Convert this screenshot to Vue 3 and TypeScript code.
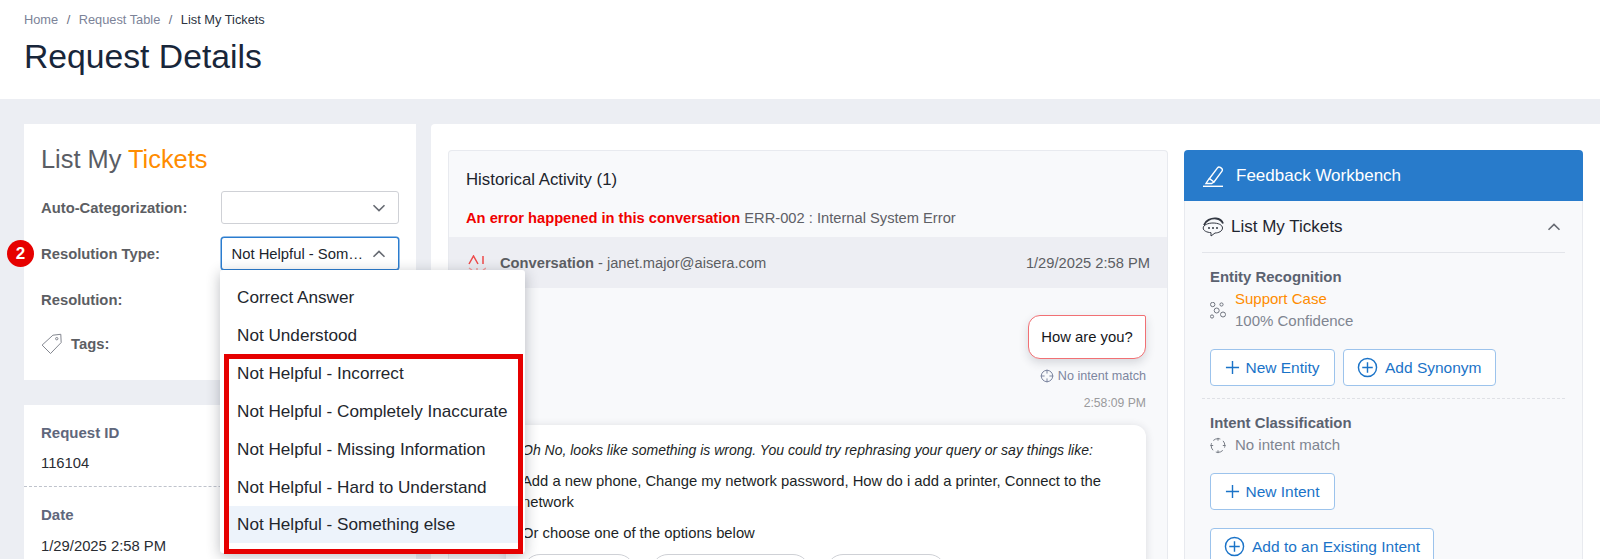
<script setup lang="ts">
const upper: string[] = ['Correct Answer', 'Not Understood']
const lower: string[] = [
  'Not Helpful - Incorrect',
  'Not Helpful - Completely Inaccurate',
  'Not Helpful - Missing Information',
  'Not Helpful - Hard to Understand',
]
const chips: number[] = [112, 159, 120]
</script>

<template>
  <div class="page">
    <header class="top">
      <nav class="crumbs">
        <span>Home</span><i>/</i><span>Request Table</span><i>/</i><b>List My Tickets</b>
      </nav>
      <h1>Request Details</h1>
    </header>

    <div class="content">
      <aside class="left">
        <section class="form-card">
          <h2>List My <em>Tickets</em></h2>
          <div class="row">
            <label>Auto-Categorization:</label>
            <div class="select">
              <svg class="chev" viewBox="0 0 14 8"><path d="M1.5 1.2 7 6.6l5.5-5.4" /></svg>
            </div>
          </div>
          <div class="row">
            <span class="badge">2</span>
            <label>Resolution Type:</label>
            <div class="select open">
              <span>Not Helpful - Som…</span>
              <svg class="chev" viewBox="0 0 14 8"><path d="M1.5 6.8 7 1.4l5.5 5.4" /></svg>
              <div class="menu">
                <div v-for="o in upper" :key="o" class="opt">{{ o }}</div>
                <div class="redbox">
                  <div class="redlist">
                    <div v-for="o in lower" :key="o" class="opt">{{ o }}</div>
                    <div class="opt hover">Not Helpful - Something else</div>
                  </div>
                </div>
              </div>
            </div>
          </div>
          <div class="row"><label>Resolution:</label></div>
          <div class="row tags">
            <svg class="tag" viewBox="0 0 24 24" fill="none">
              <path d="M1.2 13.2 13 2.4l8.6-1 .4 9L10.4 22.4Z" />
              <circle cx="17.2" cy="6.2" r="1.3" />
            </svg>
            <label>Tags:</label>
          </div>
        </section>

        <section class="info-card">
          <div class="info first">
            <h4>Request ID</h4>
            <p>116104</p>
          </div>
          <div class="info">
            <h4>Date</h4>
            <p>1/29/2025 2:58 PM</p>
          </div>
        </section>
      </aside>

      <main class="main">
        <section class="history">
          <h3>Historical Activity (1)</h3>
          <p class="err"><b>An error happened in this conversation</b> ERR-002 : Internal System Error</p>
          <div class="band">
            <svg class="ai" viewBox="0 0 18 18" fill="none">
              <path d="M1 9 5.500 1 10 9M15 1v8" />
              <path class="pale" d="M1 13l3 2M15 15l3-2M9 13v2" />
            </svg>
            <span class="conv"><b>Conversation</b> - janet.major@aisera.com</span>
            <span class="when">1/29/2025 2:58 PM</span>
          </div>
          <div class="chat">
            <div class="bubble">How are you?</div>
            <div class="match">
              <svg viewBox="0 0 14 14" fill="none">
                <circle cx="7" cy="7" r="5.700" />
                <path d="M7 .6v4M7 9.400v4M.6 7h4M9.400 7h4" />
              </svg>
              No intent match
            </div>
            <div class="time">2:58:09 PM</div>
            <div class="reply">
              <p><i>Oh No, looks like something is wrong. You could try rephrasing your query or say things like:</i></p>
              <p>Add a new phone, Change my network password, How do i add a printer, Connect to the network</p>
              <p>Or choose one of the options below</p>
              <div class="chips">
                <span v-for="w in chips" :key="w" class="chip" :style="{ width: w + 'px' }"></span>
              </div>
            </div>
          </div>
        </section>

        <section class="bench">
          <div class="bench-head">
            <svg viewBox="0 0 22 22" fill="none">
              <path d="M7.500 13.500 15.500 2.800a2 2 0 0 1 2.800-.4l1.300 1a2 2 0 0 1 .4 2.800L12 17Z" />
              <path d="M7.500 13.500 5.800 15.600 4 18.500h5.600L12 17" />
              <path d="M1 21.300h20" />
            </svg>
            Feedback Workbench
          </div>
          <div class="bench-body">
            <div class="bench-title">
              <svg viewBox="0 0 22 20" fill="none">
                <path class="thick" d="M2 8C3.500 3.500 9 1 14 1.500c3.500.4 6 2 7 5" />
                <path d="M11 6c5 0 9.500 1.800 9.500 5S16.500 16 13 16l-4 3v-3.300C5 15.300 1.200 14 1.200 11 1.200 8 6 6 11 6Z" />
                <circle class="dot" cx="7" cy="11" r="1" />
                <circle class="dot" cx="11" cy="11" r="1" />
                <circle class="dot" cx="15" cy="11" r="1" />
              </svg>
              <span>List My Tickets</span>
              <svg class="chev up" viewBox="0 0 14 8"><path d="M1.500 6.800 7 1.400l5.500 5.400" /></svg>
            </div>

            <div class="block entity">
              <h5>Entity Recognition</h5>
              <div class="rec">
                <svg viewBox="0 0 16 17" fill="none">
                  <circle cx="2.700" cy="2.500" r="2.200" />
                  <circle cx="11.500" cy="2.500" r="1.600" />
                  <circle cx="6.700" cy="8.500" r="2.500" />
                  <circle cx="2" cy="14.500" r="1.600" />
                  <circle cx="13" cy="12.500" r="2.500" />
                </svg>
                <div>
                  <div class="org">Support Case</div>
                  <div class="conf">100% Confidence</div>
                </div>
              </div>
              <div class="btns">
                <button class="btn w125">
                  <svg class="plus" viewBox="0 0 16 16"><path d="M8 1v14M1 8h14" /></svg>New Entity
                </button>
                <button class="btn">
                  <svg class="cplus" viewBox="0 0 22 22"><circle cx="11" cy="11" r="9.500" /><path d="M11 5.500v11M5.500 11h11" /></svg>Add Synonym
                </button>
              </div>
            </div>

            <div class="block intent">
              <h5>Intent Classification</h5>
              <div class="rec one">
                <svg viewBox="0 0 17 17" fill="none">
                  <circle class="ring" cx="8.500" cy="8.500" r="7.300" />
                  <path d="M8.500 .4v3M8.500 13.600v3M.4 8.500h3M13.600 8.500h3" />
                </svg>
                <div class="conf">No intent match</div>
              </div>
              <button class="btn w125 solo">
                <svg class="plus" viewBox="0 0 16 16"><path d="M8 1v14M1 8h14" /></svg>New Intent
              </button>
              <button class="btn solo second">
                <svg class="cplus" viewBox="0 0 22 22"><circle cx="11" cy="11" r="9.500" /><path d="M11 5.500v11M5.500 11h11" /></svg>Add to an Existing Intent
              </button>
            </div>
          </div>
        </section>
      </main>
    </div>
  </div>
</template>

<style>
html, body { margin: 0; height: 559px; overflow: hidden; background: #eceef3; }
</style>

<style scoped>
.page {
  width: 1600px;
  height: 559px;
  overflow: hidden;
  background: #eceef3;
  font-family: "Liberation Sans", Arial, sans-serif;
  font-size: 14.8px;
  color: #1c1f26;
}
p, h1, h2, h3, h4, h5 { margin: 0; }

.top {
  height: 99px;
  box-sizing: border-box;
  background: #fff;
  padding: 12px 0 0 24px;
}
.crumbs { display: flex; font-size: 12.800px; line-height: 16px; color: #7c8398; }
.crumbs i { font-style: normal; margin: 0 8.500px; color: #6a7182; }
.crumbs b { font-weight: 400; color: #2c3442; }
h1 {
  margin-top: 7px;
  font-size: 33.700px;
  line-height: 42px;
  font-weight: 400;
  color: #18263a;
}

.content { display: flex; gap: 15px; padding: 25px 0 0 24px; height: 460px; box-sizing: border-box; }

.left { width: 392px; flex: none; display: flex; flex-direction: column; gap: 25px; }
.form-card { height: 256px; flex: none; box-sizing: border-box; background: #fff; padding: 20px 17px 0; }
h2 { font-size: 25.400px; line-height: 30px; font-weight: 400; color: #5a5d64; margin-bottom: 17px; }
h2 em { font-style: normal; color: #ff8c00; }
.row { position: relative; display: flex; align-items: center; height: 33px; margin-bottom: 13px; }
.row label { width: 179.500px; flex: none; font-weight: 700; color: #5c5e63; }
.row.tags { margin-top: -2px; }
.row.tags label { width: auto; margin-left: 8px; }
.tag { width: 22px; height: 22px; flex: none; stroke: #777b84; stroke-width: 1; }
.badge {
  position: absolute;
  left: -34px;
  top: 3px;
  width: 27px;
  height: 27px;
  border-radius: 50%;
  background: #e60000;
  color: #fff;
  font-weight: 700;
  font-size: 17px;
  line-height: 27px;
  text-align: center;
}
.select {
  position: relative;
  width: 178.500px;
  height: 33px;
  box-sizing: border-box;
  border: 1px solid #cfd1d6;
  border-radius: 3px;
  background: #fff;
  display: flex;
  align-items: center;
  padding-left: 10px;
  color: #20242c;
}
.select.open { border-color: #2a7ccf; box-shadow: 0 0 0 .5px #2a7ccf; }
.chev {
  position: absolute;
  right: 12px;
  top: 12px;
  width: 14px;
  height: 8px;
  fill: none;
  stroke: #666a72;
  stroke-width: 1.600;
}
.menu {
  position: absolute;
  left: -1.500px;
  top: 32px;
  width: 305px;
  height: 283px;
  z-index: 3;
  box-sizing: border-box;
  padding-top: 8px;
  background: #fff;
  border-radius: 3px;
  box-shadow: 0 3px 14px rgba(30, 35, 50, .3);
  font-size: 17.150px;
}
.opt { height: 38px; line-height: 38px; padding-left: 17px; color: #23262d; }
.redbox {
  position: absolute;
  left: 4px;
  top: 84px;
  width: 299px;
  height: 200px;
  box-sizing: border-box;
  border: 5px solid #e60000;
}
.redlist { margin-top: -5px; }
.redbox .opt { padding-left: 8px; height: 38px; }
.redbox .hover { background: #edf3fb; height: 37px; line-height: 37px; }

.info-card { flex: 1; background: #fff; }
.info { height: 82px; box-sizing: border-box; padding: 19px 0 0 17px; }
.info.first { border-bottom: 1px dashed #bfc3cc; }
.info.first p { margin-top: 12px; }
.info h4 { font-size: 15px; line-height: 18px; color: #5f677c; }
.info p { margin-top: 13px; line-height: 18px; color: #2a2d33; }

.main {
  flex: 1;
  display: flex;
  gap: 16px;
  background: #fff;
  border-radius: 4px 0 0 0;
  padding: 26px 17px 0;
  min-width: 0;
}
.history {
  width: 720px;
  flex: none;
  box-sizing: border-box;
  background: #f8f9fb;
  border: 1px solid #e8eaef;
  border-bottom: 0;
  border-radius: 4px 4px 0 0;
  overflow: hidden;
}
h3 { font-size: 16.800px; font-weight: 400; line-height: 20px; padding: 19px 0 0 17px; color: #20242c; }
.err { padding: 18px 0 0 17px; line-height: 20px; font-size: 14.700px; color: #5e6066; }
.err b { color: #f00000; }
.band {
  margin-top: 9px;
  height: 51px;
  background: #edeef3;
  display: flex;
  align-items: center;
  padding: 0 17px 0 19px;
  color: #5c5e63;
  font-size: 14.700px;
}
.ai { width: 18px; height: 18px; margin: 3px 14px 0 0; stroke: #ee4a4a; stroke-width: 1.500; }
.ai .pale { stroke: #f4a0a0; }
.conv { flex: 1; }
.chat { display: flex; flex-direction: column; align-items: flex-end; padding: 27px 21px 0 0; }
.bubble {
  width: 118px;
  height: 44px;
  box-sizing: border-box;
  background: #fff;
  border: 1px solid #f17074;
  border-radius: 12px 2px 12px 12px;
  box-shadow: 0 4px 10px rgba(40, 45, 60, .16);
  line-height: 42px;
  text-align: center;
  color: #15171b;
}
.match { margin-top: 9px; display: flex; align-items: center; font-size: 12.600px; line-height: 16px; color: #7d86a0; }
.match svg { width: 14px; height: 14px; margin-right: 4px; stroke: #7d86a0; stroke-width: 1; }
.time { margin-top: 11px; font-size: 12.200px; line-height: 16px; color: #9a9a9c; }
.reply {
  margin-top: 14px;
  align-self: flex-end;
  width: 640px;
  height: 200px;
  box-sizing: border-box;
  background: #fff;
  border-radius: 12px;
  padding: 15px 0 0 16px;
  box-shadow: 0 1px 8px rgba(40, 45, 60, .14);
  color: #1c1f26;
}
.reply p { line-height: 21px; margin-bottom: 10px; width: 590px; }
.reply i { font-size: 14px; }
.chips { display: flex; gap: 16px; margin: 0 0 0 1px; }
.chip { height: 34px; border: 1px solid #cfd1d6; border-radius: 17px; box-sizing: border-box; }

.bench { width: 399px; flex: none; box-sizing: border-box; }
.bench-head {
  height: 51px;
  background: #287bcb;
  border-radius: 4px 4px 0 0;
  color: #fff;
  font-size: 17px;
  display: flex;
  align-items: center;
  padding-left: 18px;
}
.bench-head svg { width: 22px; height: 22px; margin-right: 12px; stroke: #fff; stroke-width: 1.400; }
.bench-body {
  background: #f8f9fb;
  border: 1px solid #e8eaef;
  border-width: 0 1px;
  height: 380px;
  padding: 0 17px;
}
.bench-title {
  position: relative;
  height: 51px;
  border-bottom: 1px solid #e3e5ea;
  display: flex;
  align-items: center;
  font-size: 17px;
  color: #1f2530;
}
.bench-title > svg:first-child { width: 22px; height: 20px; margin-right: 7px; stroke: #333842; stroke-width: 1; }
.bench-title .thick { stroke-width: 1.800; }
.bench-title .dot { fill: #333842; stroke: none; }
.chev.up { right: 4px; top: 22px; }
.block { padding-left: 8px; }
.entity { height: 146px; border-bottom: 1px dashed #dfe1e6; box-sizing: border-box; padding-top: 15px; }
.intent { padding-top: 15px; }
h5 { font-size: 14.900px; line-height: 18px; color: #5b6270; }
.rec { display: flex; align-items: center; gap: 9px; margin-top: 2px; }
.rec > svg { width: 16px; height: 17px; stroke: #70757f; stroke-width: 1; flex: none; }
.rec .ring { stroke-dasharray: 8 3.470; stroke-dashoffset: 5.700; }
.org { font-size: 15px; line-height: 22px; color: #ff8c00; }
.conf { font-size: 15px; line-height: 22px; color: #7f8591; }
.btns { display: flex; gap: 8px; margin-top: 17px; }
.btn {
  display: flex;
  align-items: center;
  justify-content: center;
  height: 37px;
  box-sizing: border-box;
  padding: 0 13px;
  border: 1px solid #9cc3ec;
  border-radius: 4px;
  background: #fff;
  color: #1a73c8;
  font: inherit;
  font-size: 15.500px;
  white-space: nowrap;
}
.w125 { width: 125px; padding: 0; }
.plus { width: 15px; height: 15px; margin-right: 5px; stroke: #1a73c8; stroke-width: 1.500; fill: none; }
.cplus { width: 21px; height: 21px; margin-right: 7px; stroke: #1a73c8; stroke-width: 1.500; fill: none; }
.solo { margin-top: 17px; }
.second { margin-top: 18px; }
</style>
